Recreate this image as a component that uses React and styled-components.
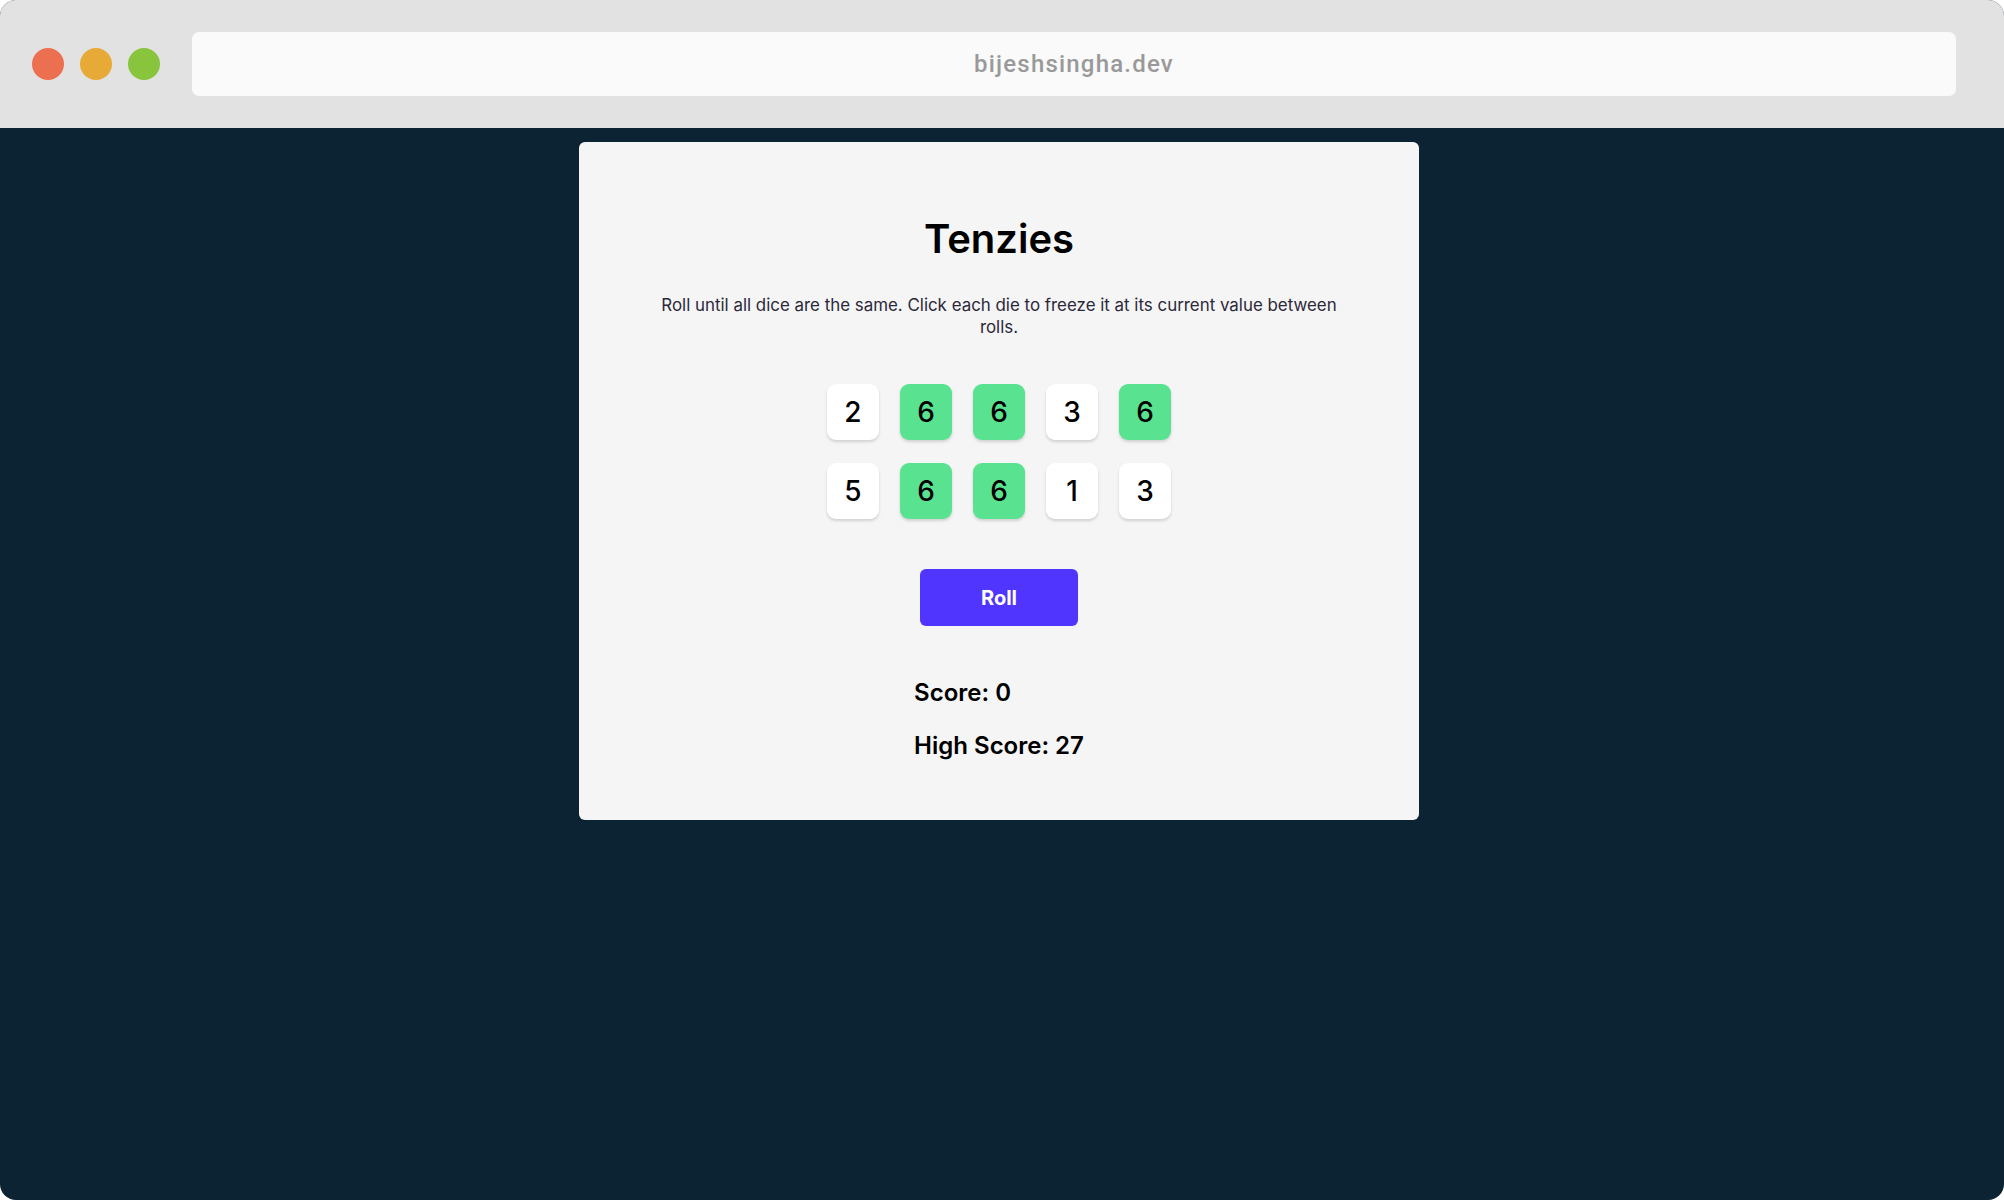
import React from "react";
import styled, { createGlobalStyle } from "styled-components";

const GlobalStyle = createGlobalStyle`
  html, body {
    margin: 0;
    padding: 0;
    background: #ffffff;
  }
  body {
    font-family: Inter, "Noto Sans", sans-serif;
  }
  * { box-sizing: border-box; }
`;

const Window = styled.div`
  width: 2004px;
  height: 1200px;
  border-radius: 16px;
  overflow: hidden;
  display: flex;
  flex-direction: column;
  background: #0c2333;
`;

const TopBar = styled.div`
  height: 128px;
  flex: 0 0 128px;
  background: #e2e2e2;
  display: flex;
  align-items: center;
  padding: 0 48px 0 32px;
`;

const Lights = styled.div`
  display: flex;
  gap: 16px;
  margin-right: 32px;
`;

const Light = styled.span`
  width: 32px;
  height: 32px;
  border-radius: 50%;
  background: ${(p) => p.$color};
`;

const UrlBar = styled.div`
  flex: 1;
  height: 64px;
  border-radius: 7px;
  background: #fafafa;
  display: flex;
  align-items: center;
  justify-content: center;
  font-family: Roboto, "Liberation Sans", sans-serif;
  font-size: 24px;
  letter-spacing: 1.2px;
  color: #999999;
  font-weight: 500;
`;

const Main = styled.main`
  flex: 1;
  display: flex;
  justify-content: center;
  align-items: flex-start;
  padding: 14px 6px 0 0;
`;

const Card = styled.section`
  width: 840px;
  background: #f5f5f5;
  border-radius: 6px;
  padding: 73px 70px 60px;
  display: flex;
  flex-direction: column;
  align-items: center;
`;

const Title = styled.h1`
  margin: 0;
  font-size: 40px;
  line-height: 48px;
  font-weight: 600;
  color: #000;
`;

const Description = styled.p`
  margin: 31px 0 0;
  font-size: 16.9px;
  line-height: 22px;
  color: #2b283a;
  text-align: center;
  max-width: 690px;
`;

const DiceGrid = styled.div`
  margin-top: 46px;
  display: grid;
  grid-template-columns: repeat(5, 52px);
  column-gap: 21px;
  row-gap: 23px;
`;

const Die = styled.button`
  width: 52px;
  height: 56px;
  border: none;
  border-radius: 9px;
  background: ${(p) => (p.$held ? "#59e391" : "#ffffff")};
  box-shadow: 0 2px 3px rgba(0, 0, 0, 0.15);
  display: flex;
  align-items: center;
  justify-content: center;
  font-family: Inter, sans-serif;
  font-size: 28px;
  font-weight: 500;
  color: #000;
  padding: 0;
  cursor: pointer;
`;

const RollButton = styled.button`
  margin-top: 50px;
  width: 158px;
  height: 57px;
  border: none;
  border-radius: 6px;
  background: #5035ff;
  color: #fff;
  font-family: Inter, sans-serif;
  font-size: 20px;
  font-weight: 700;
  cursor: pointer;
`;

const Scores = styled.div`
  margin-top: 52px;
  display: flex;
  flex-direction: column;
  gap: 24px;
  align-items: flex-start;
`;

const ScoreLine = styled.p`
  margin: 0;
  font-size: 24px;
  line-height: 29px;
  font-weight: 600;
  color: #000;
`;

const dice = [
  { v: 2, held: false },
  { v: 6, held: true },
  { v: 6, held: true },
  { v: 3, held: false },
  { v: 6, held: true },
  { v: 5, held: false },
  { v: 6, held: true },
  { v: 6, held: true },
  { v: 1, held: false },
  { v: 3, held: false },
];

export default function App() {
  return (
    <>
      <GlobalStyle />
      <Window>
        <TopBar>
          <Lights>
            <Light $color="#ec6f4f" />
            <Light $color="#e8aa36" />
            <Light $color="#88c43c" />
          </Lights>
          <UrlBar>bijeshsingha.dev</UrlBar>
        </TopBar>
        <Main>
          <Card>
            <Title>Tenzies</Title>
            <Description>
              Roll until all dice are the same. Click each die to freeze it at
              its current value between rolls.
            </Description>
            <DiceGrid>
              {dice.map((d, i) => (
                <Die key={i} $held={d.held}>
                  {d.v}
                </Die>
              ))}
            </DiceGrid>
            <RollButton>Roll</RollButton>
            <Scores>
              <ScoreLine>Score: 0</ScoreLine>
              <ScoreLine>High Score: 27</ScoreLine>
            </Scores>
          </Card>
        </Main>
      </Window>
    </>
  );
}
